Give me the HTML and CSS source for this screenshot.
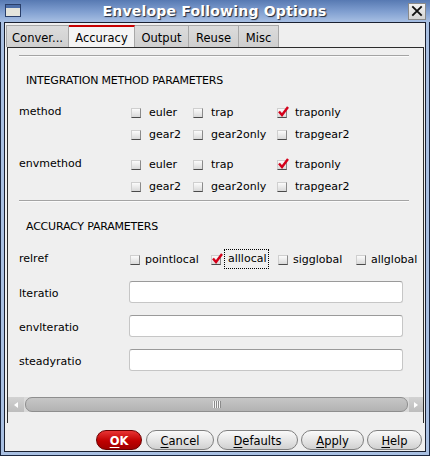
FILE: index.html
```html
<!DOCTYPE html>
<html>
<head>
<meta charset="utf-8">
<link rel="stylesheet" href="styles.css">
</head>
<body>
<div class="window">
  <div class="titlebar">
    <svg class="appicon" width="16" height="13" viewBox="0 0 16 13">
      <rect x="0.5" y="0.5" width="15" height="12" fill="#e4e4dc" stroke="#2a3f6a"/>
      <rect x="1" y="1" width="14" height="3" fill="#4c6ea8"/>
    </svg>
    <div class="title">Envelope Following Options</div>
    <div class="closebtn">
      <svg width="17" height="16" viewBox="0 0 17 16">
        <path d="M3.5 3 L13.5 13 M13.5 3 L3.5 13" stroke="#111" stroke-width="2" fill="none"/>
      </svg>
    </div>
  </div>
  <div class="client">
    <div class="tabs">
      <div class="tab t1">Conver...</div>
      <div class="tab t2 selected">Accuracy</div>
      <div class="tab t3">Output</div>
      <div class="tab t4">Reuse</div>
      <div class="tab t5">Misc</div>
    </div>
    <div class="tabbody">
      <div class="content">
        <div class="sep first"></div>
        <div class="header h1">INTEGRATION METHOD PARAMETERS</div>
        <div class="group">
          <div class="row">
            <div class="label">method</div>
            <div class="opts m">
              <div class="cb"><span class="box"></span>euler</div>
              <div class="cb"><span class="box"></span>trap</div>
              <div class="cb"><span class="box checked"><svg viewBox="0 0 12 12"><path d="M2 5.5 L5 9 L11 1" stroke="#d4001a" stroke-width="2.4" fill="none"/></svg></span>traponly</div>
            </div>
          </div>
          <div class="row">
            <div class="label"></div>
            <div class="opts m">
              <div class="cb"><span class="box"></span>gear2</div>
              <div class="cb"><span class="box"></span>gear2only</div>
              <div class="cb"><span class="box"></span>trapgear2</div>
            </div>
          </div>
        </div>
        <div class="group g2">
          <div class="row">
            <div class="label">envmethod</div>
            <div class="opts m">
              <div class="cb"><span class="box"></span>euler</div>
              <div class="cb"><span class="box"></span>trap</div>
              <div class="cb"><span class="box checked"><svg viewBox="0 0 12 12"><path d="M2 5.5 L5 9 L11 1" stroke="#d4001a" stroke-width="2.4" fill="none"/></svg></span>traponly</div>
            </div>
          </div>
          <div class="row">
            <div class="label"></div>
            <div class="opts m">
              <div class="cb"><span class="box"></span>gear2</div>
              <div class="cb"><span class="box"></span>gear2only</div>
              <div class="cb"><span class="box"></span>trapgear2</div>
            </div>
          </div>
        </div>
        <div class="sep second"></div>
        <div class="header h2">ACCURACY PARAMETERS</div>
        <div class="row relref">
          <div class="label">relref</div>
          <div class="opts r">
            <div class="cb"><span class="box"></span>pointlocal</div>
            <div class="cb"><span class="box checked"><svg viewBox="0 0 12 12"><path d="M2 5.5 L5 9 L11 1" stroke="#d4001a" stroke-width="2.4" fill="none"/></svg></span><span class="focus">alllocal</span></div>
            <div class="cb"><span class="box"></span>sigglobal</div>
            <div class="cb"><span class="box"></span>allglobal</div>
          </div>
        </div>
        <div class="row field f1">
          <div class="label">lteratio</div>
          <div class="input"></div>
        </div>
        <div class="row field">
          <div class="label">envlteratio</div>
          <div class="input"></div>
        </div>
        <div class="row field">
          <div class="label">steadyratio</div>
          <div class="input"></div>
        </div>
      </div>
      <div class="hscroll">
        <div class="arrow left"><svg width="8" height="8" viewBox="0 0 8 8"><path d="M6 1 L2 4 L6 7 Z" fill="#fff"/></svg></div>
        <div class="thumb"><span class="grip"></span></div>
        <div class="arrow right"><svg width="8" height="8" viewBox="0 0 8 8"><path d="M2 1 L6 4 L2 7 Z" fill="#fff"/></svg></div>
      </div>
    </div>
    <div class="buttons">
      <div class="btn ok"><u>O</u>K</div>
      <div class="btn cancel"><u>C</u>ancel</div>
      <div class="btn defaults"><u>D</u>efaults</div>
      <div class="btn apply"><u>A</u>pply</div>
      <div class="btn help"><u>H</u>elp</div>
    </div>
  </div>
</div>
</body>
</html>
```

FILE: styles.css
```css
* { box-sizing: border-box; }
html, body { margin: 0; padding: 0; }
body {
  width: 430px;
  height: 456px;
  overflow: hidden;
  font-family: "DejaVu Sans", sans-serif;
  font-size: 11px;
  color: #000;
}
.window {
  width: 430px;
  height: 456px;
  background: #a9c0e2;
  border: 1px solid #1b2740;
  border-top: none;
  display: flex;
  flex-direction: column;
}
.titlebar {
  height: 22px;
  margin: 0 -1px;
  background: linear-gradient(to bottom, #5779b2 0%, #7e9dcf 50%, #a7bfe3 100%);
  display: flex;
  align-items: center;
  position: relative;
  padding: 0 4px 0 5px;
}
.appicon { display: block; margin-top: -1px; }
.title {
  flex: 1;
  text-align: center;
  color: #fff;
  font-weight: bold;
  font-size: 14px;
  letter-spacing: 0.2px;
  text-shadow: 1px 1px 1px #222a3a;
  margin-top: -1px;
}
.closebtn {
  width: 18px;
  height: 17px;
  background: linear-gradient(#f2f2f2, #d4d4d4);
  border: 1px solid #8a8a8a;
  display: flex;
  align-items: center;
  justify-content: center;
  margin-top: 0px;
}
.closebtn svg { display: block; }
.client {
  flex: 1;
  margin: 0 3px 3px 3px;
  border: 1px solid #1a2030;
  background: #efefef;
  display: flex;
  flex-direction: column;
}
.tabs {
  display: flex;
  margin-top: 2px;
  padding-left: 1px;
  height: 22px;
}
.tab {
  height: 22px;
  background: linear-gradient(#dcdcdc, #cfcfcf);
  border: 1px solid #a8a8a8;
  border-bottom: none;
  display: flex;
  align-items: center;
  justify-content: center;
  padding-top: 3px;
  font-size: 11.5px;
}
.tab + .tab { border-left: none; }
.t1 { width: 63px; }
.t2 { width: 66px; }
.t3 { width: 54px; }
.t4 { width: 50px; }
.t5 { width: 40px; }
.tab.selected {
  background: #f4f4f4;
  border-top: 2px solid #c80000;
  padding-top: 2px;
}
.tabbody {
  height: 376px;
  margin: 0 1px 0 2px;
  border-top: 1px solid #2c2c2c;
  border-left: 1px solid #2c2c2c;
  border-right: 1px solid #2c2c2c;
  display: flex;
  flex-direction: column;
}
.content {
  height: 349px;
  display: flex;
  flex-direction: column;
}
.sep {
  height: 2px;
  width: 390px;
  margin-left: 11px;
  border-top: 1px solid #a4a4a4;
  border-bottom: 1px solid #fbfbfb;
}
.sep.first { margin-top: 7px; }
.sep.second { margin-top: 3px; }
.header {
  line-height: 14px;
  padding-left: 18px;
  letter-spacing: -0.2px;
}
.h1 { margin-top: 17px; }
.h2 { margin-top: 18px; }
.group { margin-top: 13px; }
.group.g2 { margin-top: 8px; }
.row {
  display: flex;
  align-items: center;
  height: 22px;
}
.label {
  width: 121px;
  flex: none;
  padding-left: 11px;
  margin-top: -2px;
}
.opts { display: flex; align-items: center; }
.opts.m { padding-left: 2px; }
.opts.m .cb:nth-child(1) { width: 62px; }
.opts.m .cb:nth-child(2) { width: 84px; }
.opts.r { padding-left: 1px; }
.opts.r .cb:nth-child(1) { width: 81px; }
.opts.r .cb:nth-child(2) { width: 67px; }
.opts.r .cb:nth-child(3) { width: 78px; }
.cb {
  display: flex;
  align-items: center;
  white-space: nowrap;
}
.box {
  width: 10px;
  height: 10px;
  flex: none;
  margin-right: 8px;
  margin-top: 1px;
  background: linear-gradient(#fbfbfb, #d9d9d9);
  border: 1px solid;
  border-color: #cfcfcf #8a8a8a #4a4a4a #cfcfcf;
  position: relative;
}
.box svg {
  position: absolute;
  left: -1px;
  top: -3px;
  width: 12px;
  height: 12px;
}
.relref { margin-top: 14px; }
.relref .box { margin-right: 5px; }
.opts.r .cb:nth-child(2) .box { margin-right: 3px; }
.focus {
  border: 1px dotted #000;
  padding: 2px 2px 3px 3px;
}
.field .label { margin-top: 2px; }
.f1 { margin-top: 11px; }
.field + .field { margin-top: 12px; }
.input {
  width: 274px;
  height: 22px;
  background: #fff;
  border: 1px solid #c6c6c6;
  border-top-color: #9a9a9a;
  border-radius: 3px;
}
.hscroll {
  height: 15px;
  display: flex;
  background: #dadada;
}
.arrow {
  width: 16px;
  height: 15px;
  background: linear-gradient(#d2d2d2, #bdbdbd);
  display: flex;
  align-items: center;
  justify-content: center;
  flex: none;
}
.arrow.right { width: 14px; }
.thumb {
  flex: 1;
  margin: 0 1px;
  background: linear-gradient(#c6c6c6, #b3b3b3);
  border: 1px solid #8e8e8e;
  border-radius: 7px;
  display: flex;
  align-items: center;
  justify-content: center;
}
.grip {
  width: 8px;
  height: 7px;
  background: repeating-linear-gradient(to right, #f4f4f4 0 1px, #8a8a8a 1px 2px);
}
.buttons {
  display: flex;
  justify-content: flex-end;
  gap: 3px;
  margin-top: 7px;
  padding-right: 3px;
}
.btn {
  height: 20px;
  border-radius: 10px;
  border: 1px solid #7f7f7f;
  background: linear-gradient(#fafafa, #e2e2e2 60%, #d0d0d0);
  display: flex;
  align-items: center;
  justify-content: center;
  font-size: 11.5px;
  padding-top: 1px;
}
.btn u { text-decoration-thickness: 1px; text-underline-offset: 2px; }
.ok {
  width: 46px;
  background: linear-gradient(#e83434, #c00000 55%, #a00000);
  border-color: #6a0000;
  color: #fff;
  font-weight: bold;
  margin-right: 1px;
}
.cancel { width: 68px; }
.defaults { width: 81px; }
.apply { width: 63px; }
.help { width: 55px; }
```
